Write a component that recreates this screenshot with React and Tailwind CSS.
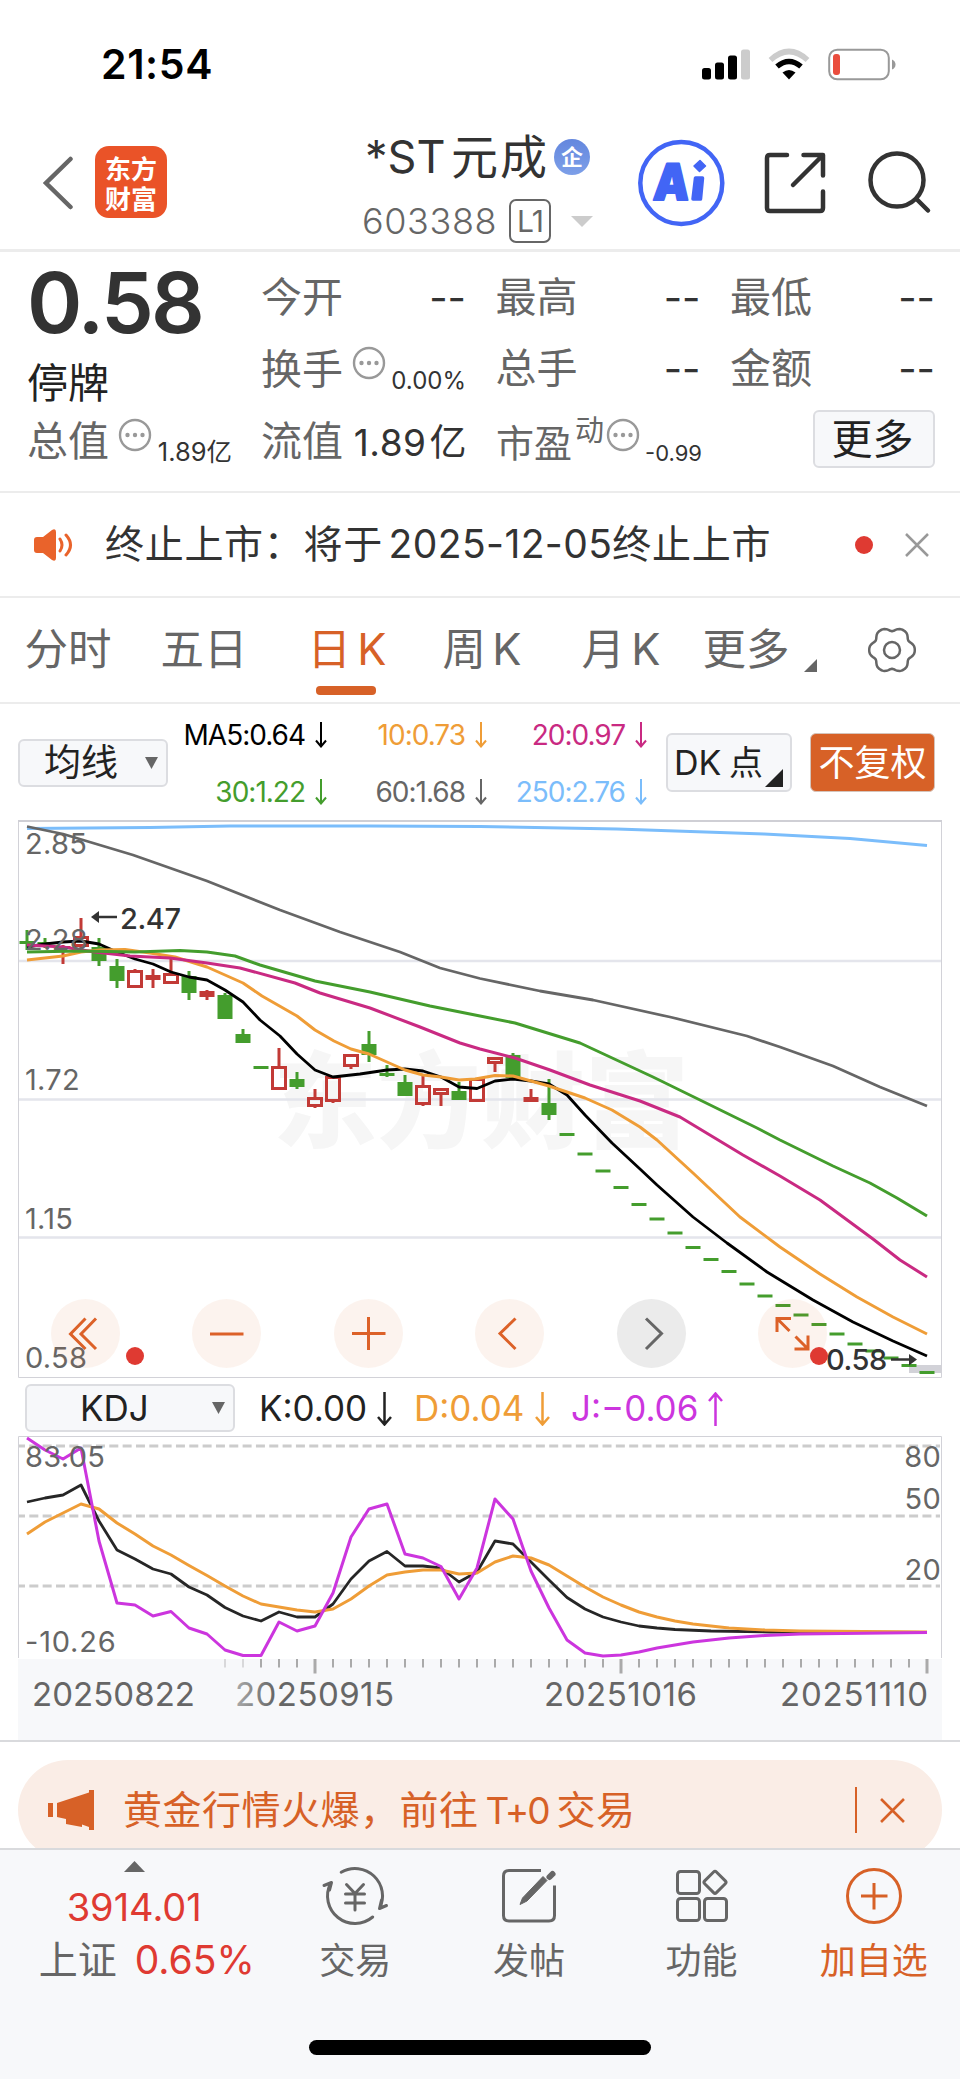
const candles = [
    // [type, high, top, bottom, low]  g = down, r = up (hollow), f = up (solid)
    ['g', 930, 941, 944, 950], ['g', 938, 942, 944, 948], ['f', 945, 946, 948, 964], ['r', 918, 937, 946, 949],
    ['g', 938, 947, 961, 966], ['g', 959, 966, 981, 988], ['r', 969, 971, 987, 988], ['f', 969, 975, 980, 988],
    ['r', 959, 974, 983, 984], ['g', 971, 976, 993, 1000], ['f', 990, 991, 997, 1000], ['g', 993, 995, 1019, 1019],
    ['g', 1029, 1034, 1043, 1043], ['g', 1066, 1066, 1069, 1069], ['r', 1048, 1067, 1089, 1090], ['g', 1072, 1079, 1087, 1089],
    ['r', 1089, 1098, 1106, 1108], ['r', 1077, 1077, 1101, 1103], ['r', 1054, 1055, 1066, 1069], ['g', 1031, 1044, 1055, 1062],
    ['g', 1065, 1073, 1076, 1077], ['g', 1075, 1082, 1096, 1096], ['r', 1075, 1086, 1104, 1106], ['r', 1088, 1089, 1094, 1106],
    ['g', 1082, 1091, 1100, 1100], ['r', 1078, 1079, 1101, 1102], ['r', 1057, 1058, 1063, 1072], ['g', 1053, 1055, 1078, 1078],
    ['f', 1089, 1097, 1102, 1102], ['g', 1079, 1103, 1115, 1120],
];

const limitDown = [1134.5, 1154, 1171, 1187.5, 1204.5, 1219, 1233, 1247.5, 1259.5, 1271.5, 1284, 1296, 1305.5, 1315, 1324.5, 1334, 1344, 1351, 1358, 1365.5, 1372.5];

const averages = [
    { color: '#7bbdfb', width: 3, points: '27,828.5 150,827.5 230,826 370,826 480,826.5 617,829 764,834 850,838.5 927,845.5' },
    { color: '#666', width: 2.8, points: '27,826.5 63,834 133,855 207,881 280,910 340,932 400,952 440,968 480,978.5 540,991 593,1000 670,1017 747,1036 780,1047 833,1066 880,1087 927,1106' },
    { color: '#000', width: 2.8, points: '27,947 45,944 63,942 81,941 99,944 117,952 135,959 153,964 171,972 189,977 207,980 225,990 243,1002 260,1020 280,1036 297,1054 315,1070 333,1077 360,1074 387,1070 405,1069 423,1071 441,1077 459,1087 477,1088.5 495,1081 513,1079 531,1081 549,1084 567,1095 585,1115 612,1143 640,1169 657,1185 693,1217 727,1243 767,1272 813,1300 853,1322 893,1341 927,1356' },
    { color: '#ef9d37', width: 3, points: '27,960 63,956 81,952 100,950 125,949.5 150,953 175,957 207,967 243,983 262,996 297,1016 315,1030 334,1041 351,1049 369,1054 405,1070 423,1075 441,1077 459,1080 475,1079 495,1075.5 513,1076 549,1086 585,1098 612,1110 640,1127 657,1140 693,1173 740,1217 780,1247 820,1274 857,1297 893,1317 927,1334' },
    { color: '#c92a82', width: 3, points: '27,945 63,947 95,952 130,956 170,958 207,963 240,968 295,983 320,993 370,1008 420,1027 460,1043 480,1049 515,1058 550,1070 590,1085 640,1101 680,1117 743,1155 780,1176 820,1200 873,1239 900,1260 927,1277' },
    { color: '#449d2d', width: 3, points: '27,952 80,951 135,952 180,950.5 207,952 235,956 260,965 315,981 370,992 430,1006 480,1016 515,1023 580,1043 653,1077 700,1100 757,1128 780,1140 833,1166 870,1183 897,1198 927,1216' },
];

const kdjLines = [
    { color: '#262626', width: 2.8, points: '27,1502 45,1498 63,1495 81,1485 99,1521 117,1550 135,1559 153,1569 171,1574 189,1587 207,1595 225,1607.5 243,1616 261,1621 279,1612 297,1617 315,1617 333,1604 351,1579 369,1561 387,1551.5 405,1566 423,1566 441,1568 459,1582 477,1572 495,1541 513,1544 531,1562 549,1580 567,1597.5 585,1609 603,1617 621,1622 639,1626 657,1628 675,1629.5 711,1631 771,1632 927,1632.5' },
    { color: '#ef9d37', width: 3, points: '27,1534 45,1522 63,1513 81,1504 99,1509 117,1523 135,1534 153,1546 171,1555 189,1565.5 207,1575.5 225,1586 243,1596 261,1604 279,1607 297,1610 315,1612 333,1609 351,1599 369,1586 387,1575 405,1572 423,1570 441,1570 459,1574 477,1573 495,1562 513,1556 531,1558 549,1565 567,1576 585,1587 603,1597 621,1605 639,1612 657,1617 675,1621 693,1624 729,1628 765,1630 800,1631 927,1632' },
    { color: '#cc35de', width: 3, points: '27,1438 45,1450 63,1459 81,1448 99,1541 117,1603 135,1605 153,1616 171,1611.5 189,1628 207,1634 225,1650 243,1655.5 261,1655.5 279,1622 297,1631 315,1626 333,1593 351,1537 369,1509 387,1504 405,1554 423,1558 441,1566.5 459,1599 477,1568 495,1499 513,1519 531,1571 549,1608 567,1640 585,1653 603,1656 621,1655 639,1652 657,1648 675,1645 693,1642 729,1638 765,1635.5 800,1634 927,1632.5' },
];

const gearPath = Array.from({ length: 72 }, (_, i) => {
    const a = (i * Math.PI) / 36;
    const r = 21.2 + 2 * Math.cos(6 * a) - 0.4 * Math.cos(12 * a);
    return `${i ? 'L' : 'M'}${(24 + r * Math.cos(a)).toFixed(2)} ${(24 + r * Math.sin(a)).toFixed(2)}`;
}).join('') + 'Z';

const Arrow = ({ up, w = 12, h = 26, stroke = 2 }) => (
    <svg width={w} height={h} viewBox={`0 0 ${w} ${h}`} fill="none" stroke="currentColor" strokeWidth={stroke} className={up ? 'rotate-180' : ''}>
        <path d={`M${w / 2} 0V${h - 1.5}M1 ${h - w / 2 - 1.5}L${w / 2} ${h - 1.5}L${w - 1} ${h - w / 2 - 1.5}`} />
    </svg>
);

const InfoDots = () => (
    <svg width="34" height="34" viewBox="0 0 34 34" className="shrink-0">
        <circle cx="17" cy="17" r="15" fill="none" stroke="#999" strokeWidth="2.4" />
        {[9.5, 17, 24.5].map((x) => <circle key={x} cx={x} cy="17" r="2.2" fill="#999" />)}
    </svg>
);

const Close = ({ size, color, stroke }) => (
    <svg width={size} height={size} viewBox="0 0 24 24" fill="none" stroke={color} strokeWidth={stroke}>
        <path d="M1 1L23 23M23 1L1 23" />
    </svg>
);

const StatusBar = () => (
    <div className="h-[100px] flex items-center justify-between pl-[101px] pr-[64px] pt-[29px]">
        <span className="text-[41px] font-semibold text-black tracking-[0.600px]">21:54</span>
        <svg width="194" height="34" viewBox="702 47 194 34">
            <rect x="702" y="67" width="9" height="11.5" rx="2.5" />
            <rect x="715" y="61.5" width="9" height="17" rx="2.5" />
            <rect x="728" y="54.5" width="9" height="24" rx="2.5" />
            <rect x="741" y="48.500" width="9" height="30" rx="2.500" fill="#ccc" />
            <path d="M770.500 59Q789 42 807.500 59" fill="none" stroke="#ccc" strokeWidth="5.500" />
            <path d="M777 65.500Q789 55.500 801 65.500" fill="none" stroke="#000" strokeWidth="5.500" />
            <path d="M782.500 71.500Q789 66.500 795.500 71.500L789 78.500Z" />
            <rect x="829.200" y="48.700" width="59.600" height="29.600" rx="8" fill="none" stroke="#999" strokeWidth="2" />
            <rect x="833" y="53" width="7" height="21" rx="3" fill="#ea4d3d" />
            <path d="M892 58.500Q895.500 60 895.500 63.500Q895.500 67 892 68.500Z" fill="#999" />
        </svg>
    </div>
);

const Header = () => (
    <header className="h-[152px] border-b-[3px] border-[#ececec] flex items-start relative">
        <svg width="30" height="54" viewBox="0 0 30 54" className="ml-[43px] mt-[56px]" fill="none" stroke="#666" strokeWidth="4.500" strokeLinecap="round">
            <path d="M27.500 3L3 27L27.500 51" />
        </svg>
        <div className="ml-[22px] mt-[46px] w-[72px] h-[72px] rounded-[14px] bg-[#ea5328] text-white text-[26px] font-bold flex flex-col items-center justify-center gap-[3px]" style={{ fontFamily: '"Noto Sans CJK SC", sans-serif' }}>
            <span className="leading-[27px]">东方</span>
            <span className="leading-[27px]">财富</span>
        </div>
        <div className="ml-[195px] mt-[27px] w-[245px]">
            <div className="flex items-center h-[60px] text-[#333] pl-[3px]">
                <span className="text-[45px] leading-[60px] w-[86px]">*ST</span>
                <span className="text-[47px] leading-[60px] whitespace-nowrap tracking-[2px]">元成</span>
                <span className="ml-[5px] w-9 h-9 rounded-full bg-linear-to-b from-[#6487de] to-[#7d9fe8] text-white text-[22px] font-bold flex items-center justify-center shrink-0">企</span>
            </div>
            <div className="flex items-center h-11 mt-[12px]">
                <span className="text-[36px] font-light text-[#666] w-[147px] tracking-[0.600px]">603388</span>
                <span className="w-[42px] h-[44px] border-2 border-[#666] rounded-[7px] text-[30px] text-[#666] flex items-center justify-center tracking-[-1px]">L1</span>
                <svg width="22" height="11" className="ml-5"><path d="M0 0H22L11 11Z" fill="#ccc" /></svg>
            </div>
        </div>
        <svg width="300" height="92" viewBox="635 136 300 92" fill="none" stroke="#333" strokeWidth="4.500" strokeLinecap="round" strokeLinejoin="round" className="absolute left-[635px] top-[36px]">
            <circle cx="681.300" cy="183" r="41" stroke="#4265f5" strokeWidth="4.500" />
            <text x="653" y="200" fontSize="50" fontWeight="900" fill="#4265f5" stroke="#4265f5" strokeWidth="2" fontFamily="Inter" textLength="36" lengthAdjust="spacingAndGlyphs" transform="skewX(-4) translate(13.500 0)">A</text>
            <path d="M695.500 178H702.500L700.500 199H693Z" fill="#4265f5" stroke="#4265f5" strokeWidth="3.500" />
            <path d="M700 160.500L705.500 166L699.500 171.500L694 166Z" fill="#4265f5" stroke="#4265f5" strokeWidth="1.500" />
            <path d="M787 155H770Q767 155 767 158V208Q767 211 770 211H820Q823 211 823 208V191.500" />
            <path d="M803.500 155H823V175.500M822 156L793 185" />
            <circle cx="897" cy="180" r="26.500" />
            <path d="M917 199.500L928 210.500" />
        </svg>
    </header>
);

const Cell = ({ label, value }) => (
    <div className="flex items-center justify-between h-[54px]">
        <span className="text-[41px] text-[#666]">{label}</span>
        <span className="text-[40px] text-[#333]">{value}</span>
    </div>
);

const Quote = () => (
    <section className="h-[241px] border-b-2 border-[#ececec] pl-[27px] pr-[25px] pt-[10px] whitespace-nowrap">
        <div className="flex h-[151px]">
            <div className="w-[234px]">
                <div className="text-[84px] leading-[82px] font-semibold text-[#333] tracking-[-2.600px]">0.58</div>
                <div className="text-[41px] leading-[60px] text-[#222] mt-[9px]">停牌</div>
            </div>
            <div className="grid grid-cols-[205px_205px_205px] content-start gap-x-[29.500px] gap-y-[17px] pt-[9px]">
                <Cell label="今开" value="--" />
                <Cell label="最高" value="--" />
                <Cell label="最低" value="--" />
                <div className="flex h-[54px]">
                    <span className="text-[41px] leading-[54px] text-[#666]">换手</span>
                    <span className="ml-[9px] mt-[4px]"><InfoDots /></span>
                    <span className="ml-auto self-end text-[24px] leading-[28px] text-[#333] pb-px">0.00%</span>
                </div>
                <Cell label="总手" value="--" />
                <Cell label="金额" value="--" />
            </div>
        </div>
        <div className="flex h-[60px]">
            <div className="w-[205px] flex">
                <span className="text-[41px] leading-[56px] text-[#666]">总值</span>
                <span className="ml-[9px] mt-[5px]"><InfoDots /></span>
                <span className="ml-auto mt-[25px] text-[25.500px] leading-[28px] text-[#333]">1.89亿</span>
            </div>
            <div className="w-[206px] ml-[29px] flex justify-between">
                <span className="text-[41px] leading-[56px] text-[#666]">流值</span>
                <span className="text-[37px] leading-[60px] text-[#333] tracking-[0.500px]">1.89<span className="ml-[3px]">亿</span></span>
            </div>
            <div className="w-[206px] ml-[29px] flex">
                <span className="text-[38px] leading-[60px] text-[#666]">市盈</span>
                <span className="text-[29px] leading-[36px] text-[#666] ml-[3px]">动</span>
                <span className="mt-[5px] ml-[2px]"><InfoDots /></span>
                <span className="ml-auto mt-[26px] text-[22px] leading-[28px] text-[#333]">-0.99</span>
            </div>
            <button className="ml-auto -mt-[3px] w-[122px] h-[58px] border-2 border-[#dcdde1] rounded-md bg-[#f7f8fa] text-[41px] leading-[54px] text-[#222] pr-[3px]">更多</button>
        </div>
    </section>
);

const Notice = () => (
    <section className="h-[105px] border-b-2 border-[#ececec] flex items-center pl-[34px] pr-[31px]">
        <svg width="40" height="32" viewBox="0 0 40 32">
            <path d="M3 8H9L18 1Q22 -1 22 3V29Q22 33 18 31L9 24H3Q0 24 0 21V11Q0 8 3 8Z" fill="#e9632b" />
            <path d="M26 10Q30 16 26 22M32 6Q41 16 32 26" fill="none" stroke="#e9632b" strokeWidth="3" strokeLinecap="round" />
        </svg>
        <span className="ml-[31px] text-[39px] text-[#333] whitespace-nowrap tracking-[0.700px] [word-spacing:-6px]">终止上市：将于 <span className="tracking-[0.400px]">2025-12-05</span>终止上市</span>
        <span className="ml-auto mr-[32px] w-[18px] h-[18px] rounded-full bg-[#df3a32]" />
        <Close size={24} color="#999" stroke={2.500} />
    </section>
);

const tabs = [
    { label: '分时', width: 'w-[88px]' },
    { label: '五日', width: 'w-[88px] ml-[48px]' },
    { label: '日 K', width: 'w-[76px] ml-[61px]', active: true },
    { label: '周 K', width: 'w-[80px] ml-[57px]' },
    { label: '月 K', width: 'w-[80px] ml-[59px]' },
    { label: '更多', width: 'w-[88px] ml-[41px]' },
];

const Tabs = () => (
    <nav className="h-[106px] border-b-2 border-[#ececec] flex pl-[24px] pr-[44px] whitespace-nowrap">
        {tabs.map((t) => (
            <div key={t.label} className={`${t.width} shrink-0 pt-[19px] flex flex-col items-center text-[43.500px] leading-[64px] [word-spacing:-6px] ${t.active ? 'text-[#d76127]' : 'text-[#666]'}`}>
                {t.label}
                {t.active && <span className="w-[60px] h-[9px] rounded mt-[5px] -ml-[3px] bg-[#d76127]" />}
            </div>
        ))}
        <svg width="13" height="13" className="ml-[14px] mt-[61px]"><path d="M13 0V13H0Z" fill="#666" /></svg>
        <svg width="48" height="48" viewBox="0 0 48 48" className="ml-auto mt-[28px]" fill="none" stroke="#666" strokeWidth="2.500" strokeLinejoin="round">
            <path d={gearPath} />
            <circle cx="24" cy="24" r="8" />
        </svg>
    </nav>
);

const legend = [
    { text: 'MA5:0.64', color: 'text-black' },
    { text: '10:0.73', color: 'text-[#ef9d37]' },
    { text: '20:0.97', color: 'text-[#c92a82]' },
    { text: '30:1.22', color: 'text-[#449d2d]' },
    { text: '60:1.68', color: 'text-[#666]' },
    { text: '250:2.76', color: 'text-[#7bbdfb]' },
];

const Legend = () => (
    <section className="h-[116px] flex pl-[18px] pr-[25px]">
        <button className="mt-[35px] w-[150px] h-[48px] border-2 border-[#dcdde1] rounded-md bg-[#f7f8fa] flex items-center pl-[24px] pr-[8px] justify-between text-[37px] text-[#222]">
            均线
            <svg width="13" height="12"><path d="M0 0H13L6.500 12Z" fill="#666" /></svg>
        </button>
        <div className="ml-[9px] mt-[13px] grid grid-cols-[150px_160px_160px] auto-rows-[57px]">
            {legend.map((l) => (
                <span key={l.text} className={`flex items-start justify-end gap-[10px] text-[28px] leading-[36px] tracking-[-1px] ${l.color}`}>
                    {l.text}
                    <span className="pt-[5px]"><Arrow /></span>
                </span>
            ))}
        </div>
        <button className="ml-auto mt-[29px] w-[126px] h-[59px] border-2 border-[#dcdde1] rounded-md bg-[#f7f8fa] text-[34px] text-[#222] text-left pl-[6px] relative whitespace-nowrap leading-[56px] [word-spacing:-2px]">
            DK 点
            <svg width="18" height="18" className="absolute right-[7px] bottom-[3px]"><path d="M18 0V18H0Z" fill="#222" /></svg>
        </button>
        <button className="ml-[18px] mt-[29px] w-[125px] h-[59px] border border-[#d5c4bb] rounded-md bg-[#d76127] text-[36px] text-white leading-[56px]">不复权</button>
    </section>
);

const Candle = ({ x, data: [type, high, top, bottom, low] }) => {
    const color = type === 'g' ? '#449d2d' : '#c23a36';
    const hollow = type === 'r';
    return (
        <g stroke={color} strokeWidth="3">
            <path d={hollow ? `M${x} ${high}V${top}M${x} ${bottom}V${low}` : `M${x} ${high}V${low}`} />
            {hollow
                ? <rect x={x - 6.5} y={top + 0.5} width="13" height={bottom - top - 1} fill="none" />
                : <rect x={x - 7.5} y={top} width="15" height={bottom - top} fill={color} stroke="none" />}
        </g>
    );
};

const Lines = ({ data }) => data.map((l) => (
    <polyline key={l.color} points={l.points} fill="none" stroke={l.color} strokeWidth={l.width} strokeLinejoin="round" />
));

const controls = [
    { id: 'rewind', d: 'M34.500 19.500L19.500 35L34.500 50M45 19.500L30 35L45 50' },
    { id: 'minus', d: 'M18 35H51.500' },
    { id: 'plus', d: 'M18 34.500H51.500M34.500 18V51' },
    { id: 'prev', d: 'M40.500 19.500L25 34.500L40.500 50' },
    { id: 'next', d: 'M29 19.500L44.500 34.500L29 50', muted: true },
    { id: 'expand', d: 'M19 33V19.500H33M20 20.500L31.500 32M50 36.500V50H36.500M49 49L37.500 37.500' },
];

const MainChart = () => (
    <section className="relative h-[560px]">
        <svg width="960" height="560" viewBox="0 820 960 560" fontFamily="Inter" className="block">
            <text x="273" y="1140" fontSize="104" fontWeight="900" fill="#f6f6f6" fontFamily="Noto Sans CJK SC">东方财富</text>
            <path d="M18 961H942M18 1099.500H942M18 1237.500H942" stroke="#e4e5ec" strokeWidth="2.500" />
            <path d="M18.500 821V1377.500H941.500V821" fill="none" stroke="#d2d2d8" />
            <path d="M18 821H942" stroke="#cfcfd5" strokeWidth="2" />
            <rect x="909" y="1365" width="33" height="8" fill="#d2d2d8" />
            {candles.map((c, i) => <Candle key={i} x={27 + i * 18} data={c} />)}
            {limitDown.map((y, i) => <path key={y} d={`M${559.5 + i * 18} ${y}h15`} stroke="#449d2d" strokeWidth="3" />)}
            <Lines data={averages} />
            <g fontSize="29" fill="#666" letterSpacing="0.300">
                <text x="25" y="854">2.85</text>
                <text x="25" y="950">2.28</text>
                <text x="25" y="1090">1.72</text>
                <text x="25" y="1229">1.15</text>
                <text x="25" y="1367.500">0.58</text>
            </g>
            <g fontSize="29" fontWeight="500" fill="#333" letterSpacing="-0.400">
                <text x="120" y="929">2.47</text>
                <path d="M91 917L99 911V923Z" />
                <path d="M99 917H117" stroke="#333" strokeWidth="2.500" />
                <text x="826" y="1370">0.58</text>
                <path d="M917 1359.500L909 1354V1365.500Z" />
                <path d="M891 1359.500H909" stroke="#333" strokeWidth="2.500" />
            </g>
        </svg>
        <div className="absolute left-[51px] top-[479px] w-[776px] flex justify-between">
            {controls.map((c) => (
                <button key={c.id} className={`w-[69px] h-[69px] rounded-full ${c.muted ? 'bg-[#ebebeb]' : 'bg-[#d76127]/8'}`}>
                    <svg width="69" height="69" viewBox="0 0 69 69" fill="none" stroke={c.muted ? '#666' : '#dc6128'} strokeWidth="3">
                        <path d={c.d} />
                    </svg>
                </button>
            ))}
        </div>
        <span className="absolute left-[126px] top-[527px] w-[18px] h-[18px] rounded-full bg-[#df3a32]" />
        <span className="absolute left-[810px] top-[527px] w-[18px] h-[18px] rounded-full bg-[#df3a32]" />
    </section>
);

const KdjBar = () => (
    <section className="h-[56px] flex pl-[25px] text-[35px] leading-[48px] whitespace-nowrap">
        <button className="mt-[4px] w-[210px] h-[48px] border-2 border-[#dcdde1] rounded-md bg-[#f7f8fa] flex items-center pl-[53px] pr-[8px] justify-between text-[#222]">
            KDJ
            <svg width="13" height="12"><path d="M0 0H13L6.500 12Z" fill="#666" /></svg>
        </button>
        <span className="ml-[24px] mt-[4px] w-[133px] flex justify-between text-[#222]">K:0.00<span className="pt-[8px]"><Arrow w={15} h={34} stroke={2.500} /></span></span>
        <span className="ml-[22px] mt-[4px] w-[136px] flex justify-between text-[#ef9d37]">D:0.04<span className="pt-[8px]"><Arrow w={15} h={34} stroke={2.500} /></span></span>
        <span className="ml-[21px] mt-[4px] w-[152px] flex justify-between text-[#cc35de]">J:−0.06<span className="pt-[8px]"><Arrow up w={15} h={34} stroke={2.500} /></span></span>
    </section>
);

const KdjChart = () => (
    <section className="h-[306px] border-b-2 border-[#d9dadd]">
        <svg width="960" height="304" viewBox="0 1436 960 304" fontFamily="Inter" className="block">
            <defs>
                <linearGradient id="fade" gradientUnits="userSpaceOnUse" x1="215" y1="0" x2="275" y2="0">
                    <stop offset="0" stopColor="#ccc" />
                    <stop offset="1" stopColor="#666" />
                </linearGradient>
            </defs>
            <rect x="18" y="1659" width="924" height="82" fill="#f7f8fa" />
            <path d="M18.500 1658V1436.500H941.500V1658" fill="none" stroke="#d2d2d8" />
            <path d="M19 1446H940M19 1516H940M19 1586H940" stroke="#ccc" strokeWidth="3" strokeDasharray="9 4.330" strokeDashoffset="3" />
            <Lines data={kdjLines} />
            {Array.from({ length: 40 }, (_, i) => {
                const x = 225 + i * 18;
                const major = [315, 621, 927].includes(x);
                return <path key={x} d={`M${x} 1659V${major ? 1673.5 : 1667.5}`} stroke={i < 2 ? '#d8d8da' : '#aaa'} strokeWidth={major ? 3 : 2} />;
            })}
            <g fontSize="29" fill="#666" letterSpacing="0.300">
                <text x="25" y="1466.500">83.05</text>
                <text x="25" y="1651.500" textLength="91">-10.26</text>
                <text x="941" y="1466.500" textAnchor="end">80</text>
                <text x="941" y="1509" textAnchor="end">50</text>
                <text x="941" y="1579.500" textAnchor="end">20</text>
            </g>
            <g fontSize="33" fill="#666">
                <text x="32" y="1706" textLength="163">20250822</text>
                <text x="235" y="1706" textLength="159" fill="url(#fade)">20250915</text>
                <text x="544" y="1706" textLength="153">20251016</text>
                <text x="780" y="1706" textLength="148">20251110</text>
            </g>
        </svg>
    </section>
);

const Banner = () => (
    <section className="h-[106px] pt-[18px] px-[18px] overflow-hidden">
        <div className="h-[100px] rounded-[50px] bg-[#faede6] flex items-center pl-[30px] pr-[37px] text-[#d76127]">
            <svg width="46" height="40" viewBox="0 0 46 40" fill="#d76127">
                <path d="M0 13H5V27H0ZM9 13L41 2.500V0H46V40H41V37L34 34.500V37L18 34V29L9 27Z" />
            </svg>
            <span className="ml-[29px] text-[39px] whitespace-nowrap tracking-[0.500px]">
                黄金行情火爆，前往<span className="text-[37px] ml-[7px] mr-[8px] tracking-[-2px]">T+0</span>交易
            </span>
            <span className="ml-auto w-[2px] h-[46px] bg-[#d76127] mr-[23px]" />
            <Close size={25} color="#d76127" stroke={2.500} />
        </div>
    </section>
);

const navItems = [
    {
        label: '交易', width: 'w-[174px]', icon: (
            <svg width="68" height="60" viewBox="322 1866 68 60" fill="none" stroke="#666" strokeWidth="3" strokeLinecap="round" strokeLinejoin="round">
                <path d="M342.200 1872.200A27.500 27.500 0 0 1 380.500 1908.500L387.500 1905.500M380.500 1908.500L382.500 1900" />
                <path d="M373.700 1917A27.500 27.500 0 0 1 331.500 1883.500M325 1885.500L332.500 1882.500L330.500 1890" />
                <path d="M347.500 1884.500L356 1893.500L364.500 1884.500M356 1893.500V1910M346.500 1894H365.500M346.500 1903H365.500" />
            </svg>
        ),
    },
    {
        label: '发帖', width: 'w-[174px]', icon: (
            <svg width="58" height="60" viewBox="500 1866 58 60" fill="none" stroke="#666" strokeWidth="3" strokeLinejoin="round">
                <path d="M541 1870.500H509Q503.500 1870.500 503.500 1876V1915.500Q503.500 1921 509 1921H549Q554.500 1921 554.500 1915.500V1885.500" />
                <path d="M549.500 1877L552.500 1874" strokeWidth="6" strokeLinecap="round" />
                <path d="M520 1904.500L522.500 1898L543 1876.500L547 1880.500L527 1901Z" fill="#666" strokeWidth="1" />
            </svg>
        ),
    },
    {
        label: '功能', width: 'w-[172px]', icon: (
            <svg width="56" height="60" viewBox="674 1866 56 60" fill="none" stroke="#666" strokeWidth="3" strokeLinejoin="round">
                <rect x="677.500" y="1871.500" width="22" height="22" rx="3" />
                <rect x="677.500" y="1898.500" width="22" height="22" rx="3" />
                <rect x="704.500" y="1898.500" width="22" height="22" rx="3" />
                <rect x="706.700" y="1874" width="16.600" height="16.600" rx="2" transform="rotate(45 715 1882.300)" />
            </svg>
        ),
    },
    {
        label: '加自选', width: 'w-[173px]', active: true, icon: (
            <svg width="60" height="60" viewBox="0 0 60 60" fill="none" stroke="#d76127" strokeWidth="3">
                <circle cx="30" cy="30" r="26.500" />
                <path d="M17 30H43.500M30 17V43.500" />
            </svg>
        ),
    },
];

const BottomBar = () => (
    <footer className="h-[231px] border-t-2 border-[#d9dadd] bg-[#f7f8fa] relative">
        <div className="flex">
            <div className="w-[269px] pt-[11px] flex flex-col items-center whitespace-nowrap">
                <svg width="21" height="11"><path d="M10.500 0L21 11H0Z" fill="#666" /></svg>
                <span className="text-[38px] leading-[44px] text-[#df3a32] mt-[13px]">3914.01</span>
                <div className="flex mt-[9px] ml-[25px] text-[39px] leading-[44px]">
                    <span className="text-[#666]">上证</span>
                    <span className="text-[#df3a32] ml-[18px]">0.65%</span>
                </div>
            </div>
            {navItems.map((n) => (
                <div key={n.label} className={`${n.width} pt-[16px] flex flex-col items-center whitespace-nowrap text-[36px] ${n.active ? 'text-[#d76127]' : 'text-[#666]'}`}>
                    {n.icon}
                    <span className="mt-[8px] leading-[54px]">{n.label}</span>
                </div>
            ))}
        </div>
        <div className="absolute left-[309px] top-[190px] w-[342px] h-[15px] rounded-full bg-black" />
    </footer>
);

const App = () => (
    <div className="w-[960px] h-[2079px] overflow-hidden bg-white" style={{ fontFamily: 'Inter, "Noto Sans CJK SC", sans-serif' }}>
        <StatusBar />
        <Header />
        <Quote />
        <Notice />
        <Tabs />
        <Legend />
        <MainChart />
        <KdjBar />
        <KdjChart />
        <Banner />
        <BottomBar />
    </div>
);

export default App;
